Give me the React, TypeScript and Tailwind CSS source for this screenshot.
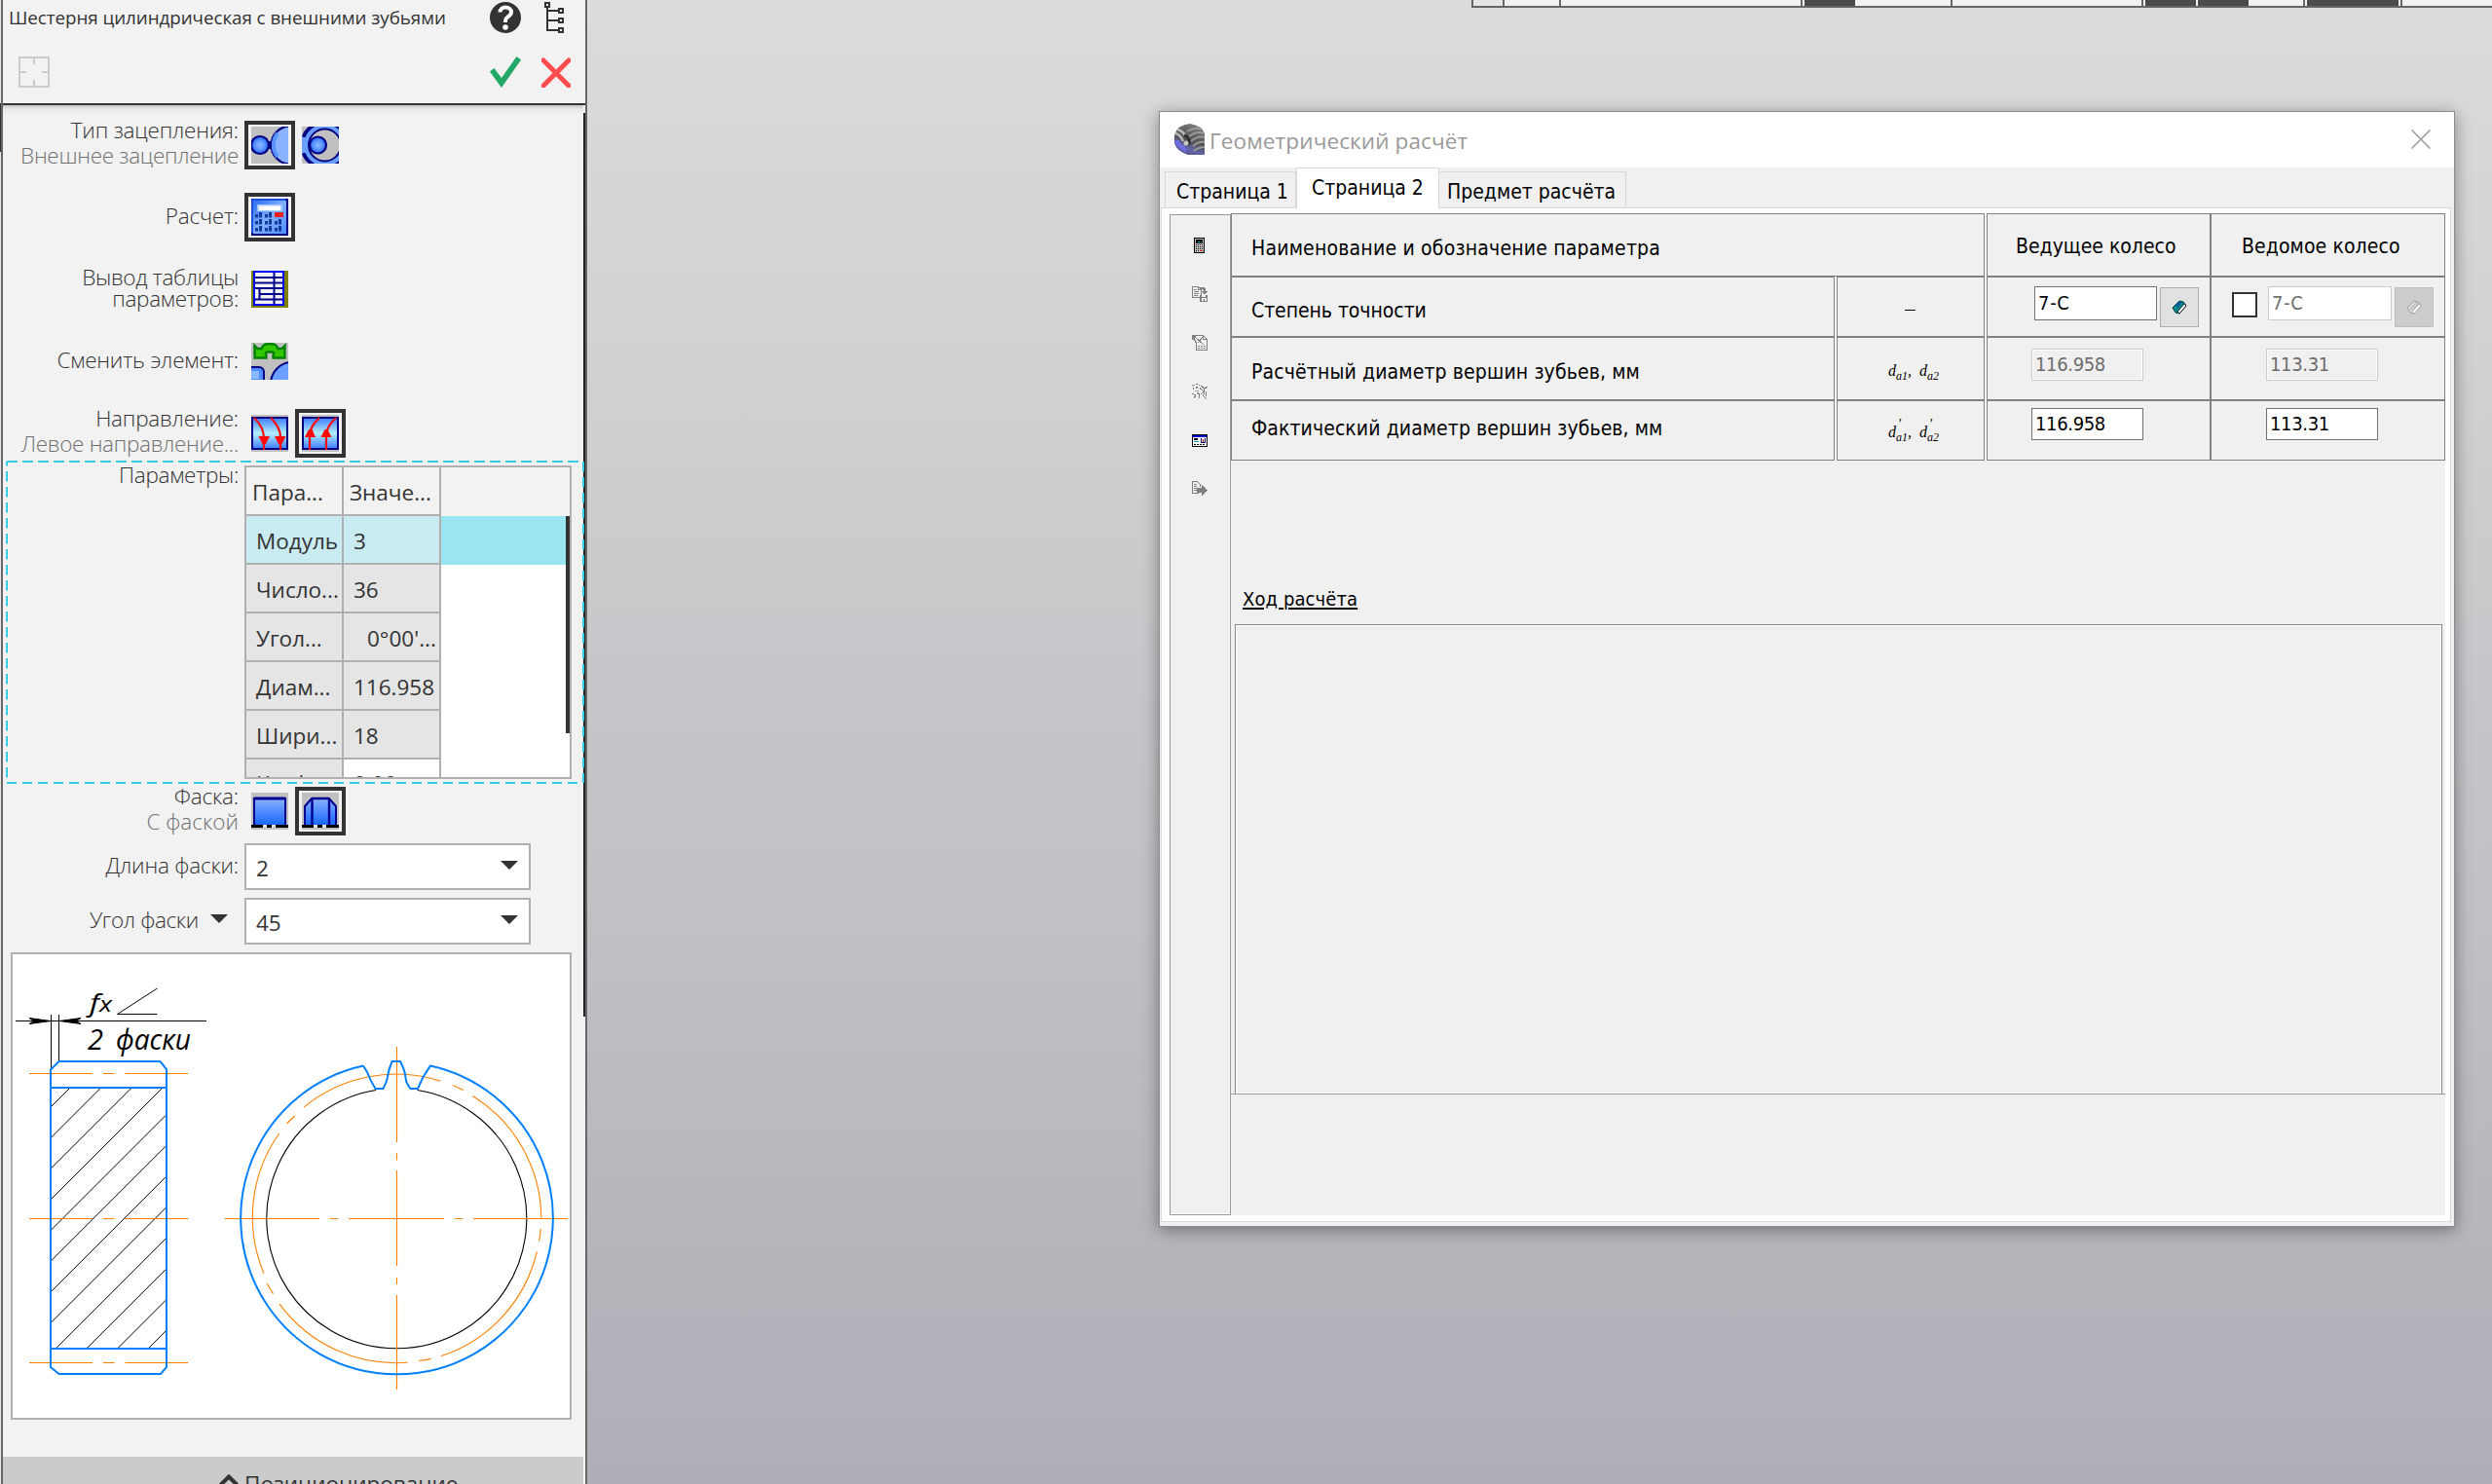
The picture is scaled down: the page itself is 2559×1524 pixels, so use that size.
import { Fragment, type ReactNode } from "react";

const ui = "font-['Open_Sans','Noto_Sans',sans-serif]";
const tahoma = "font-['DejaVu_Sans_Condensed','DejaVu_Sans',sans-serif]";

function T({ className = "", children }: { className?: string; children: ReactNode }) {
  return <span className={`inline-block whitespace-pre ${className}`}>{children}</span>;
}

/* ---------- command icons, 38x38 ---------- */

function Defs() {
  return (
    <svg className="absolute h-0 w-0" aria-hidden="true">
      <defs>
        <radialGradient id="ball">
          <stop offset="0" stopColor="#8fb8ff" />
          <stop offset="0.55" stopColor="#5c95ff" />
          <stop offset="1" stopColor="#1f62f5" />
        </radialGradient>
        <linearGradient id="sky" x1="0" y1="0" x2="0" y2="1">
          <stop offset="0" stopColor="#8ab2ff" />
          <stop offset="1" stopColor="#1464ff" />
        </linearGradient>
        <linearGradient id="tube" x1="0" y1="0" x2="0" y2="1">
          <stop offset="0" stopColor="#3c7cff" />
          <stop offset="0.5" stopColor="#b4f0ff" />
          <stop offset="1" stopColor="#3c7cff" />
        </linearGradient>
        <linearGradient id="calc" x1="0" y1="0" x2="1" y2="1">
          <stop offset="0" stopColor="#2a6cf5" />
          <stop offset="0.5" stopColor="#7fb0ff" />
          <stop offset="1" stopColor="#4a8cff" />
        </linearGradient>
        <linearGradient id="steel" x1="0.6" y1="0" x2="0.2" y2="1">
          <stop offset="0" stopColor="#7a7a78" />
          <stop offset="0.5" stopColor="#525254" />
          <stop offset="0.75" stopColor="#6465a8" />
          <stop offset="1" stopColor="#4a4a86" />
        </linearGradient>
      </defs>
    </svg>
  );
}

function Ico({ children }: { children: ReactNode }) {
  return (
    <svg viewBox="0 0 38 38" className="h-[38px] w-[38px] overflow-hidden">
      {children}
    </svg>
  );
}

const ExternalMesh = () => (
  <Ico>
    <rect width="38" height="38" fill="#c0c0c0" />
    <circle cx="9" cy="19" r="9" fill="url(#ball)" stroke="#000080" strokeWidth="2.2" />
    <circle cx="40" cy="19" r="19.5" fill="#8ab2ff" stroke="#000080" strokeWidth="2.2" />
    <path d="M27 7a19 19 0 0 0 0 24" fill="none" stroke="#5a92ff" strokeWidth="4" />
    <path d="M18 15h3v8h-3z" fill="#000080" />
  </Ico>
);

const InternalMesh = () => (
  <Ico>
    <rect width="38" height="38" fill="#c0c0c0" />
    <circle cx="23.5" cy="19" r="19.5" fill="none" stroke="#6a9eff" strokeWidth="5" />
    <circle cx="23.5" cy="19" r="16.5" fill="none" stroke="#000080" strokeWidth="2" />
    <circle cx="23.5" cy="19" r="22.5" fill="none" stroke="#000080" strokeWidth="2" />
    <path d="M0 10Q2 4 7 0H10Q4 6 3 12zM0 28Q2 34 7 38H10Q4 32 3 26z" fill="#000080" />
    <rect x="0" y="11" width="4" height="16" fill="#6a9eff" />
    <circle cx="16.5" cy="19" r="8.500" fill="url(#ball)" stroke="#000080" strokeWidth="2.2" />
  </Ico>
);

const Calculator = () => (
  <Ico>
    <rect x="1" y="1" width="36" height="36" fill="url(#calc)" stroke="#000080" strokeWidth="2" />
    <path d="M1 1h34M1 1v34" stroke="#1c50d8" strokeWidth="2" />
    <rect x="6" y="6" width="26" height="7" fill="#a9ccff" />
    <rect x="8" y="7.500" width="22" height="4.500" fill="#fff" />
    <rect x="24" y="14" width="9" height="5" fill="#ee1c1c" />
    {[[4, 14], [14, 14], [4, 21], [14, 21], [24, 21], [4, 28], [14, 28], [24, 28]].map(([x, y]) => (
      <g key={`${x}-${y}`} fill="#123a9c">
        <path d={`M${x} ${y + 2}h3v3.5h-3z`} />
        <path d={`M${x + 4} ${y}h3v5.5h-3z`} />
      </g>
    ))}
  </Ico>
);

const TableOut = () => (
  <Ico>
    <rect width="38" height="38" fill="#808000" />
    <rect x="2" y="0" width="32" height="36" fill="#0000ff" />
    <rect x="4" y="2" width="28" height="32" fill="#f2f2f6" />
    <path d="M4 7h28M4 12.500h28M4 18h28M9 24h23M4 29.500h28" stroke="#00008a" strokeWidth="2" />
    <path d="M23.500 2v32M8.500 18v11" stroke="#00008a" strokeWidth="2" />
  </Ico>
);

const SwapItem = () => (
  <Ico>
    <rect width="38" height="38" fill="#c0c0c0" />
    <path
      d="M3.500 3l3 3h4C12 2 14 1 19 1s7 1 8.500 5h4l3-3v12.500H22.500v-3q2-2-1-3h-5q-3 1-1 3v3H3.500z"
      fill="#32c800"
      stroke="#008000"
      strokeWidth="2.400"
    />
    <rect x="-8" y="25" width="21" height="21" rx="5" fill="#4f8dff" stroke="#000080" strokeWidth="2" />
    <rect x="0" y="29" width="8" height="8" fill="#8ab8ff" />
    <circle cx="42" cy="42" r="22" fill="#6a9eff" stroke="#000080" strokeWidth="2" />
  </Ico>
);

const HelixRight = () => (
  <Ico>
    <rect width="38" height="38" fill="#c0c0c0" />
    <rect x="1" y="3" width="36" height="32" fill="url(#tube)" stroke="#000080" strokeWidth="2" />
    <path d="M3 3C8 8 13 14 13 24v12M20 3c6 6 10 12 10 20v13" fill="none" stroke="#ff0a0a" strokeWidth="2.200" />
    <path d="M7.500 22h11.500l-4 8h-3.500zM24 22h11.500l-4 8h-3.500z" fill="#ff0a0a" />
  </Ico>
);

const HelixLeft = () => (
  <Ico>
    <rect width="38" height="38" fill="#c0c0c0" />
    <rect x="1" y="3" width="36" height="32" fill="url(#tube)" stroke="#000080" strokeWidth="2" />
    <path d="M8 36V20C9 13 12 9 18 3M25 36V20c1-7 4-11 10-17" fill="none" stroke="#ff0a0a" strokeWidth="2.200" />
    <path d="M3 23h11l-3.500-8H7zM19.500 23h11l-4-8h-3z" fill="#ff0a0a" />
  </Ico>
);

const NoChamfer = () => (
  <Ico>
    <rect width="38" height="38" fill="#c0c0c0" />
    <rect x="3" y="6" width="32" height="28" fill="url(#sky)" stroke="#000090" strokeWidth="2" />
    <path d="M3 6h32" stroke="#000090" strokeWidth="3" />
    <rect y="33" width="38" height="3" fill="#000" />
    <path d="M12 34.500h4M21 34.500h4" stroke="#e0e0e0" strokeWidth="3" />
  </Ico>
);

const WithChamfer = () => (
  <Ico>
    <rect width="38" height="38" fill="#c0c0c0" />
    <path d="M3 34V14l7-8h18l7 8v20z" fill="url(#sky)" stroke="#000090" strokeWidth="2" />
    <path d="M10 6h18M10.500 6v28M28 6v28" stroke="#000090" strokeWidth="2.400" />
    <rect y="33" width="38" height="3" fill="#000" />
    <path d="M12 34.500h4M21 34.500h4" stroke="#e0e0e0" strokeWidth="3" />
  </Ico>
);

function IconButton({ active, children }: { active?: boolean; children: ReactNode }) {
  return (
    <button
      className={`flex h-[50px] w-[52px] shrink-0 items-center justify-center border-4 ${
        active ? "border-[#333]" : "border-transparent"
      }`}
    >
      {children}
    </button>
  );
}

function LabelRow({ height, label, children }: { height: string; label: ReactNode; children: ReactNode }) {
  return (
    <div className={`flex shrink-0 ${height}`}>
      <div className="flex w-[242px] shrink-0 flex-col items-end">{label}</div>
      <div className="ml-[6px] flex">{children}</div>
    </div>
  );
}

const label = "text-[22.5px] leading-[26px] font-light tracking-[-0.2px] text-[#333]";
const sub = "text-[22.5px] leading-[26px] font-light tracking-[-0.3px] text-[#707070]";
const tight = "text-[22.5px] leading-[22px] font-light tracking-[-0.3px] text-[#333]";

/* ---------- parameters table ---------- */

const params: { name: string; value: string; indent?: boolean; tone: string; vtone: string; lead: string }[] = [
  { name: "Модуль", value: "3", tone: "bg-[#c9ecf2]", vtone: "bg-[#c9ecf2]", lead: "leading-[51px]" },
  { name: "Число...", value: "36", tone: "bg-[#e5e5e5]", vtone: "bg-[#e5e5e5]", lead: "leading-[51px]" },
  { name: "Угол...", value: "0°00'...", indent: true, tone: "bg-[#e5e5e5]", vtone: "bg-[#e5e5e5]", lead: "leading-[51px]" },
  { name: "Диам...", value: "116.958", tone: "bg-[#e5e5e5]", vtone: "bg-[#e5e5e5]", lead: "leading-[51px]" },
  { name: "Шири...", value: "18", tone: "bg-[#e5e5e5]", vtone: "bg-[#e5e5e5]", lead: "leading-[51px]" },
  { name: "Коэф...", value: "0.00", tone: "bg-[#e5e5e5]", vtone: "bg-white", lead: "leading-[49px]" },
];

function ParamsTable() {
  const cell = "h-[50px] shrink-0 border-r-2 border-b-2 border-[#b0b0b0] text-[22.5px] text-[#333]";
  return (
    <div className="flex h-[322px] w-[336px] flex-col overflow-hidden border-2 border-[#b0b0b0] bg-white">
      <div className="flex shrink-0 bg-[#f2f2f2] leading-[51px]">
        <div className={`${cell} w-[100px] pl-[6px]`}><T>Пара...</T></div>
        <div className={`${cell} w-[100px] pl-[6px]`}><T>Значе...</T></div>
      </div>
      <div className="flex">
        <div className="w-[200px] shrink-0">
          {params.map((p) => (
            <div key={p.name} className={`flex ${p.lead}`}>
              <div className={`${cell} w-[100px] ${p.tone} pl-[10px]`}><T>{p.name}</T></div>
              <div className={`${cell} w-[100px] ${p.vtone} ${p.indent ? "pl-[24px]" : "pl-[10px]"}`}>
                <T>{p.value}</T>
              </div>
            </div>
          ))}
        </div>
        <div className="h-[50px] w-[128px] bg-[#99e5f2]" />
        <div className="h-[223px] w-1 bg-[#333]" />
      </div>
    </div>
  );
}

const Arrow = () => (
  <svg viewBox="0 0 18 9" className="-mt-1 h-[9px] w-[18px]">
    <path d="M0 0h18L9 9z" fill="#333" />
  </svg>
);

function Combo({ value }: { value: string }) {
  return (
    <div className="flex h-[48px] w-[294px] items-center justify-between border-2 border-[#b0b0b0] bg-white pr-[11px] pl-[10px] text-[22.5px] leading-[46px] text-[#333]">
      <T className="pt-[3px]">{value}</T>
      <Arrow />
    </div>
  );
}

/* ---------- gear drawing ---------- */

const hatch = Array.from({ length: 12 }, (_, k) => 1189 + 31.65 * k);
const pitchArcs: [number, number, number, number][] = [
  [312, 1137.1, 452.4, 1110.3],
  [464.9, 1114.5, 475.8, 1119.5],
  [485.5, 1125.5, 555.8, 1251],
  [555.3, 1262, 553.6, 1274.6],
  [551.3, 1285.5, 453.2, 1392.6],
  [442.7, 1395.4, 429.9, 1397.5],
  [418.6, 1399.3, 287, 1339.2],
  [280.5, 1328.6, 274.3, 1318],
  [271, 1307.8, 286.7, 1164],
  [294.5, 1154, 302.7, 1146],
];

function GearDrawing() {
  return (
    <svg viewBox="13 980 572 476" className="h-[476px] w-[572px]">
      <g stroke="#000" strokeWidth="1" fill="none">
        {hatch.map((c) => {
          const x1 = Math.max(52, c - 1385);
          const x2 = Math.min(171, c - 1117);
          return <path key={c} d={`M${x1} ${c - x1}L${x2} ${c - x2}`} />;
        })}
        <path d="M16 1048.500H212M52.500 1042V1098M60.500 1042V1090M161.500 1041.500H120.500L161.500 1015" />
        <path d="M30 1045.500l5 3-5 3 22-3zM83 1045.500l-5 3 5 3-22-3z" fill="#000" />
        <path d="M386 1119.500A133.500 133.500 0 1 0 428.600 1119.500" strokeWidth="1.1" />
      </g>
      <g stroke="#ff8000" strokeWidth="1.1" fill="none">
        {[1102.5, 1251.5, 1399.5].map((y) => (
          <path key={y} d={`M30 ${y}H95M106 ${y}H117.5M128.5 ${y}H193`} />
        ))}
        <path d="M231 1251.500H328M338.500 1251.500H347M358 1251.500H456M467 1251.500H475M486 1251.500H583" />
        <path d="M407.500 1075V1173M407.500 1184V1191.500M407.500 1202V1300M407.500 1312V1319M407.500 1330V1427" />
        {pitchArcs.map(([x1, y1, x2, y2]) => (
          <path key={x1} d={`M${x1} ${y1}A148.7 148.7 0 0 1 ${x2} ${y2}`} />
        ))}
      </g>
      <g stroke="#0080ff" strokeWidth="2" fill="none">
        <path d="M52 1098.500L60.500 1090H164.500L171 1098V1404L165 1411H60.500L52 1404ZM52 1117H171M52 1385H171" />
        <path d="M373 1094.500A160.300 160.300 0 1 0 442 1094.500L434.500 1106L429 1118H421.500C417 1112 417 1111 416 1103C414.500 1096 413 1094 411 1090H402.600C399 1098 398.500 1102 397.500 1108C396 1114 395 1114 393.500 1118H385.500C381 1111 379 1106 377 1101L373 1094.500" />
      </g>
      <g className="font-['Open_Sans',sans-serif] italic" fill="#000">
        <text x="92" y="1039" fontSize="26" textLength="10" lengthAdjust="spacingAndGlyphs">f</text>
        <text x="102" y="1039" fontSize="22" textLength="13" lengthAdjust="spacingAndGlyphs">x</text>
        <text x="90" y="1078" fontSize="29" textLength="16" lengthAdjust="spacingAndGlyphs">2</text>
        <text x="119" y="1078" fontSize="29" textLength="77" lengthAdjust="spacingAndGlyphs">фаски</text>
      </g>
    </svg>
  );
}

/* ---------- property panel ---------- */

function PropertyPanel() {
  return (
    <aside className={`${ui} flex h-full w-[602px] shrink-0 flex-col overflow-hidden border-r-2 border-l-2 border-[#666] bg-[#f2f2f2]`}>
      <header className="flex h-[108px] shrink-0 flex-col border-b-2 border-[#333]">
        <div className="flex h-[36px] pt-0.5 pl-[6px]">
          <T className="text-[18.8px] leading-[32px] tracking-[-0.05px] text-[#333]">Шестерня цилиндрическая с внешними зубьями</T>
          <div className="mr-[21px] ml-auto flex gap-[24px]">
            <svg viewBox="0 0 32 32" className="h-8 w-8">
              <circle cx="16" cy="16" r="16" fill="#333" />
              <path d="M10.500 10.500C10.500 7 13 5.500 16 5.500s6 1.800 6 5c0 4.500-6 4.800-6 8.500v2" fill="none" stroke="#fff" strokeWidth="4" />
              <circle cx="16" cy="26" r="2.800" fill="#fff" />
            </svg>
            <svg viewBox="0 0 21 32" className="h-8 w-[21px]" fill="none" stroke="#333" strokeWidth="2">
              <path d="M1 1h4v4H1zM3 5v24h12M3 9h12M3 19h12M15 7h4v4h-4zM15 17h4v4h-4zM15 27h4v4h-4z" />
            </svg>
          </div>
        </div>
        <div className="flex pt-[22px] pl-[16px]">
          <svg viewBox="0 0 32 32" className="h-8 w-8" fill="none" stroke="#ccc" strokeWidth="2">
            <path d="M1 1h30v30H1zM16 1v7M16 24v7M1 16h7M24 16h7" />
          </svg>
          <div className="mr-[15px] ml-auto flex gap-[21px]">
            <svg viewBox="0 0 32 32" className="h-8 w-8">
              <path d="M0 15.500L4.500 12L12 22L27.500 0L32 3.500L12 32z" fill="#23a867" />
            </svg>
            <svg viewBox="0 0 30 32" className="h-8 w-[30px]">
              <path d="M2 4L28 30M28 4L2 30" stroke="#ff4d4d" strokeWidth="5" strokeLinecap="round" />
            </svg>
          </div>
        </div>
      </header>

      <div className="flex min-h-0 flex-1">
        <div className="flex w-[596px] shrink-0 flex-col bg-[linear-gradient(#c4c4c4,#e8e8e8_4px,#f2f2f2_9px)] pt-4">
          <LabelRow height="h-[74px]" label={<>
            <T className={`${label} -mt-[3px]`}>Тип зацепления:</T>
            <T className={sub}>Внешнее зацепление</T>
          </>}>
            <IconButton active><ExternalMesh /></IconButton>
            <IconButton><InternalMesh /></IconButton>
          </LabelRow>
          <LabelRow height="h-[74px]" label={<T className={`${label} mt-[11px]`}>Расчет:</T>}>
            <IconButton active><Calculator /></IconButton>
          </LabelRow>
          <LabelRow height="h-[74px]" label={<>
            <T className={`${tight} mt-[2px]`}>Вывод таблицы</T>
            <T className={tight}>параметров:</T>
          </>}>
            <IconButton><TableOut /></IconButton>
          </LabelRow>
          <LabelRow height="h-[74px]" label={<T className={`${label} mt-[11px]`}>Сменить элемент:</T>}>
            <IconButton><SwapItem /></IconButton>
          </LabelRow>
          <LabelRow height="h-[53px]" label={<>
            <T className={`${label} -mt-[3px]`}>Направление:</T>
            <T className={sub}>Левое направление...</T>
          </>}>
            <IconButton><HelixRight /></IconButton>
            <IconButton active><HelixLeft /></IconButton>
          </LabelRow>

          <section className="relative h-[332px] w-[598px] shrink-0 pt-[5px]">
            <svg viewBox="0 0 598 332" className="absolute inset-0 h-[332px] w-[598px]" fill="none" stroke="#34cbe4" strokeWidth="2">
              <path d="M4 1H596" strokeDasharray="11 5" />
              <path d="M4 331H596" strokeDasharray="10 6" />
              <path d="M4 1V331" strokeDasharray="10.500 5.500" strokeDashoffset="6" />
              <path d="M596 1V331" strokeDasharray="10.500 5.500" />
            </svg>
            <LabelRow height="h-[322px]" label={<T className={`${label} -mt-[3px] tracking-[-0.3px]`}>Параметры:</T>}>
              <ParamsTable />
            </LabelRow>
          </section>

          <div className="h-[3px] shrink-0" />
          <LabelRow height="h-[58px]" label={<>
            <T className={`${label} -mt-[3px]`}>Фаска:</T>
            <T className={`${sub} tracking-[0px]`}>С фаской</T>
          </>}>
            <IconButton><NoChamfer /></IconButton>
            <IconButton active><WithChamfer /></IconButton>
          </LabelRow>
          <LabelRow height="h-[56px]" label={<T className={`${label} mt-[10px]`}>Длина фаски:</T>}>
            <Combo value="2" />
          </LabelRow>
          <LabelRow height="h-[56px]" label={
            <div className="mt-[10px] mr-[11px] flex items-center gap-3">
              <T className={`${label} tracking-[-0.35px]`}>Угол фаски</T>
              <Arrow />
            </div>
          }>
            <Combo value="45" />
          </LabelRow>

          <div className="ml-2 h-[480px] w-[576px] shrink-0 border-2 border-[#b0b0b0] bg-white">
            <GearDrawing />
          </div>
          <div className="mt-[38px] flex h-[60px] shrink-0 bg-[#cbcbcb] pl-[222px]">
            <svg viewBox="0 0 20 12" className="mt-[18px] h-3 w-5" fill="none" stroke="#333" strokeWidth="4">
              <path d="M1.500 11L10 2.500L18.500 11" />
            </svg>
            <T className="mt-[12px] ml-[6px] text-[22.5px] leading-[32px] text-[#333]">Позиционирование</T>
          </div>
        </div>
        <div className="mt-2 h-[928px] w-0.5 shrink-0 bg-[#222]" />
      </div>
    </aside>
  );
}

/* ---------- dialog ---------- */

const tText = `${tahoma} text-[21px] leading-[24px] text-black`;
const cellB = "shrink-0 border border-[#808080]";

function Field({ value, kind, className = "" }: { value: string; kind: "on" | "off" | "readonly"; className?: string }) {
  const look =
    kind === "on"
      ? "border-[#707070] bg-white text-black"
      : kind === "off"
        ? "border-[#ccc] bg-white text-[#6d6d6d]"
        : "border-[#ccc] bg-[#f0f0f0] text-[#6d6d6d] shadow-[inset_0_0_0_1px_#fff]";
  return (
    <div className={`${tahoma} shrink-0 border pl-[3px] text-[20px] leading-[31px] ${look} ${className}`}>
      <T className={value === "7-C" ? "pt-px tracking-[0.7px]" : "tracking-[-0.35px]"}>{value}</T>
    </div>
  );
}

function Book({ off }: { off?: boolean }) {
  return (
    <svg viewBox="0 0 16 16" className="h-4 w-4">
      <path d="M1 8L8 1l4 1 3 4-7 8-4-1z" fill={off ? "#d8d8d8" : "#008b8b"} stroke={off ? "#a0a0a0" : "#003c48"} />
      <path d="M6 12L13 4l2 2-7 8z" fill="#fff" stroke={off ? "#a0a0a0" : "#000"} strokeWidth=".8" />
      {off ? <path d="M4 10l7-8M6 11l7-8" stroke="#a0a0a0" strokeWidth=".8" /> : <path d="M4 6l4-4 3 .5-5 6z" fill="#005a9c" />}
    </svg>
  );
}

function Sym({ prime }: { prime?: boolean }) {
  const item = (n: number) => (
    <span className="relative">
      d<sub className="relative -bottom-[4px] align-baseline text-[12px] leading-none">a{n}</sub>
      {prime ? <span className="absolute -top-[9px] left-[10px] text-[14px]">'</span> : null}
    </span>
  );
  return (
    <div className="inline-block font-['Liberation_Serif',serif] text-[16px] leading-[20px] whitespace-pre text-black italic">
      {item(1)},<span className="inline-block w-[8px]" />{item(2)}
    </div>
  );
}

const gridRows = [
  { name: "Расчётный диаметр вершин зубьев, мм", track: "tracking-[0.13px]", h: "h-[65px]", pt: "pt-[23px]", sym: "pt-[21px]", fld: "pt-[11px]", kind: "readonly" as const, prime: false },
  { name: "Фактический диаметр вершин зубьев, мм", track: "tracking-[0.08px]", h: "h-[62px]", pt: "pt-[16px]", sym: "pt-[19px]", fld: "pt-[7px]", kind: "on" as const, prime: true },
];

function ParamGrid() {
  return (
    <div className="flex w-[1247px] flex-col bg-[#f0f0f0]">
      <div className="flex h-[65px]">
        <div className={`${cellB} w-[774px] pt-[23px] pl-[20px]`}><T className={`${tText} tracking-[0.2px]`}>Наименование и обозначение параметра</T></div>
        <div className="w-0.5 bg-white" />
        <div className={`${cellB} w-[230px] pt-[21px] pl-[29px]`}><T className={tText}>Ведущее колесо</T></div>
        <div className={`${cellB} w-[241px] pt-[21px] pl-[31px]`}><T className={`${tText} tracking-[0.1px]`}>Ведомое колесо</T></div>
      </div>
      <div className="flex h-[62px]">
        <div className={`${cellB} w-[620px] pt-[22px] pl-[20px]`}><T className={`${tText} tracking-[-0.05px]`}>Степень точности</T></div>
        <div className="w-0.5 bg-white" />
        <div className={`${cellB} w-[152px] pt-[33px] pl-[69px]`}><div className="h-px w-[11px] bg-black" /></div>
        <div className="w-0.5 bg-white" />
        <div className={`${cellB} flex w-[230px] gap-[3px] pt-[9px] pl-[48px]`}>
          <Field value="7-C" kind="on" className="h-[35px] w-[126px]" />
          <button className="mt-px flex h-[41px] w-[40px] items-center justify-center border border-[#adadad] bg-[#e1e1e1]"><Book /></button>
        </div>
        <div className={`${cellB} flex w-[241px] pt-[9px] pl-[21px]`}>
          <div className="mt-[6px] h-[26px] w-[26px] border-2 border-[#333] bg-white" />
          <Field value="7-C" kind="off" className="ml-[11px] h-[35px] w-[127px]" />
          <button className="mt-px ml-[3px] flex h-[41px] w-[40px] items-center justify-center border border-[#bfbfbf] bg-[#ccc]"><Book off /></button>
        </div>
      </div>
      {gridRows.map((r) => (
        <div key={r.name} className={`flex ${r.h}`}>
          <div className={`${cellB} w-[620px] ${r.pt} pl-[20px]`}><T className={`${tText} ${r.track}`}>{r.name}</T></div>
          <div className="w-0.5 bg-white" />
          <div className={`${cellB} w-[152px] ${r.sym} pl-[52px]`}><Sym prime={r.prime} /></div>
          <div className="w-0.5 bg-white" />
          <div className={`${cellB} w-[230px] ${r.fld} pl-[45px]`}><Field value="116.958" kind={r.kind} className="h-[33px] w-[115px]" /></div>
          <div className={`${cellB} w-[241px] ${r.fld} pl-[56px]`}><Field value="113.31" kind={r.kind} className="h-[33px] w-[115px]" /></div>
        </div>
      ))}
    </div>
  );
}

const P = ({ d, c }: { d: string; c: string }) => <path d={d} stroke={c} fill="none" />;

function ToolStrip() {
  const g = "#808080";
  const icons: ReactNode[] = [
    <Fragment key="calc">
      <rect x="2.500" y=".5" width="10" height="15" rx="1" fill="#c0c0c0" stroke="#000" />
      <rect x="4" y="2" width="7" height="4" fill="#000" />
      <path d="M6 4.500h2M9 4.500h1" stroke="#00c8c8" />
      <path d="M4 7.500h7M4 9.500h7M4 11.500h7M4 13.500h3" stroke="#000" strokeDasharray="1 1" />
      <path d="M8 13.500h3" stroke="#e00000" />
    </Fragment>,
    <Fragment key="save">
      <P c={g} d="M.5 .5h6l3 3v8h-9zM2 3.500h3M2 5.500h5M2 7.500h5M2 9.500h4M6.500 .5v3h3" />
      <path d="M8 1h4q2 0 2 4h2l-3 4-3-4h2q0-2-4-2z" fill={g} />
      <path d="M8 9h8v7H8z" fill={g} />
      <path d="M10 9h4v2h-4zM10 12h5v3h-5z" fill="#f0f0f0" />
      <path d="M12 13h1v2h-1z" fill={g} />
    </Fragment>,
    <Fragment key="load">
      <P c={g} d="M4.500 7v8.500h11v-11l-4-4H.5v4M.5 .5l4 8M3 2l9 8M11 2l-5 6M11.500 .5v4h4" />
      <path d="M6 11.500h8M6 13.500h8" stroke={g} strokeDasharray="2 1" />
      <path d="M0 0h5L2 5H0z" fill={g} />
    </Fragment>,
    <g key="gears" fill="none" stroke={g}>
      <circle cx="5" cy="4" r="3.500" strokeDasharray="2 1" />
      <circle cx="5" cy="4" r="1" />
      <path d="M0 1l2 2M9 5l3 3-3 3M0 10l4 2-2 3M5 9l3 2-1 4M16 3l-4 3 1 4-2 2 4 4M9 2l4 3M14 8v5" />
    </g>,
    <Fragment key="report">
      <rect x=".5" y="2.500" width="15" height="12" fill="#fff" stroke="#000" />
      <path d="M1 4h14" stroke="#0000d0" strokeWidth="2" />
      <path d="M2 7h4" stroke="#000" strokeWidth="2" />
      <path d="M2 9.500h5" stroke="#00a0a0" />
      <path d="M9.500 6v4.500h4V6" stroke="#000060" fill="none" />
      <path d="M11.500 7v3" stroke="#e00000" />
      <path d="M2 12.500h12" stroke="#000" strokeDasharray="2 1" />
    </Fragment>,
    <Fragment key="exit">
      <P c={g} d="M6.500 12H.5V.5h5l3 3V6M2 3.500h3M2 5.500h3M2 7.500h3M2 9.500h3" />
      <path d="M5 7h5V4l6 5.500-6 5.500v-3H5z" fill={g} />
    </Fragment>,
  ];
  return (
    <div className="mt-px flex w-[63px] shrink-0 flex-col items-start gap-[34px] border border-[#999] bg-[#f0f0f0] pt-[23px] pl-[22px] shadow-[inset_-1px_-1px_0_#fff]">
      {icons.map((icon, i) => (
        <svg key={i} viewBox="0 0 16 16" className="h-4 w-4 shrink-0" shapeRendering="crispEdges">{icon}</svg>
      ))}
    </div>
  );
}

function Dialog() {
  return (
    <div className="absolute top-[114px] left-[1190px] flex h-[1146px] w-[1331px] flex-col border border-[#8c8c90] bg-[#f0f0f0] shadow-[0_3px_16px_rgba(0,0,0,0.4)]">
      <div className="flex h-[57px] shrink-0 items-start bg-white pl-[14px]">
        <svg viewBox="0 0 32 32" className="mt-3 h-8 w-8">
          <path d="M1 12Q4 1 17 0Q29 2 32 10V32H15Q3 28 1 20z" fill="url(#steel)" />
          <path d="M14 8q8-5 15-2M16 13q8-6 15-3M18 18q7-6 14-4M20 23q6-5 12-4M21 28q5-4 11-4" stroke="#989894" strokeWidth="2" fill="none" />
          <path d="M4 6q5 1 8 6M2 10q5 1 8 8" stroke="#b8b8b8" strokeWidth="2.500" fill="none" />
          <path d="M1 17q3 9 13 13l-2-7q-5-1-6-6z" fill="#6f6fe0" />
          <path d="M11 12q6 1 5 10" stroke="#2c2c2c" strokeWidth="2.500" fill="none" />
          <circle cx="13" cy="20" r="2.500" fill="#c8c8c4" />
        </svg>
        <T className={`${ui} mt-[12px] ml-[5px] text-[22.5px] leading-[36px] tracking-[0.12px] text-[#999]`}>Геометрический расчёт</T>
        <svg viewBox="0 0 20 20" className="mt-[18px] mr-[24px] ml-auto h-5 w-5" stroke="#999" strokeWidth="1.5">
          <path d="M.5 .5L19.500 19.500M19.500 .5L.5 19.500" />
        </svg>
      </div>
      <div className="relative z-10 -mb-px flex h-[42px] shrink-0 items-end pl-[5px]">
        <div className="h-[38px] w-[135px] border border-[#d9d9d9] bg-[#f0f0f0] pt-[8px] pl-[11px]"><T className={tText}>Страница 1</T></div>
        <div className="h-[42px] w-[147px] border border-b-0 border-[#d9d9d9] bg-white pt-[8px] pl-[15px]"><T className={tText}>Страница 2</T></div>
        <div className="h-[38px] w-[192px] border border-l-0 border-[#d9d9d9] bg-[#f0f0f0] pt-[8px] pl-[8px]"><T className={tText}>Предмет расчёта</T></div>
      </div>
      <div className="mr-[3px] ml-px flex h-[1042px] border border-[#d9d9d9] bg-white pt-[5px] pb-[6px] pl-[8px]">
        <ToolStrip />
        <div className="flex h-[1029px] w-[1247px] flex-col bg-[#f0f0f0]">
          <ParamGrid />
          <div className="h-[168px] pt-[130px] pl-[12px]">
            <T className={`${tahoma} text-[20px] leading-[24px] tracking-[0.1px] text-black underline underline-offset-2`}>Ход расчёта</T>
          </div>
          <div className="h-[483px] border-b border-[#999] pr-[3px] pl-[4px]">
            <div className="h-full border border-b-0 border-[#828790] shadow-[inset_0_0_0_1px_#fff]" />
          </div>
        </div>
      </div>
    </div>
  );
}

/* ---------- lower edge of the top toolbar ---------- */

function TopBar() {
  return (
    <div className="absolute top-0 right-0 flex h-2 w-[1048px] border-b-2 border-l-2 border-[#666] bg-[#f2f2f2]">
      <div className="w-[30px] bg-[#e5e5e5]" />
      <div className="w-0.5 bg-[#666]" />
      <div className="ml-[56px] w-0.5 bg-[#666]" />
      <div className="ml-[246px] w-0.5 bg-[#666]" />
      <div className="ml-[2px] w-[52px] bg-[#4b4b4b]" />
      <div className="ml-[98px] w-0.5 bg-[#666]" />
      <div className="ml-[194px] w-0.5 bg-[#666]" />
      <div className="ml-[2px] w-[52px] bg-[#4b4b4b]" />
      <div className="ml-[2px] w-[52px] bg-[#4b4b4b]" />
      <div className="ml-[56px] w-0.5 bg-[#666]" />
      <div className="ml-[2px] w-[94px] bg-[#4b4b4b]" />
      <div className="ml-[2px] w-0.5 bg-[#666]" />
    </div>
  );
}

export default function App() {
  return (
    <div className="relative flex h-[1524px] w-[2559px] overflow-hidden bg-[linear-gradient(#dcdcdc,#aeaeb6)]">
      <Defs />
      <div className="flex w-px shrink-0 flex-col bg-[#e8e8e8] pt-[106px]">
        <div className="h-[50px] bg-[#333]" />
      </div>
      <PropertyPanel />
      <TopBar />
      <Dialog />
    </div>
  );
}
